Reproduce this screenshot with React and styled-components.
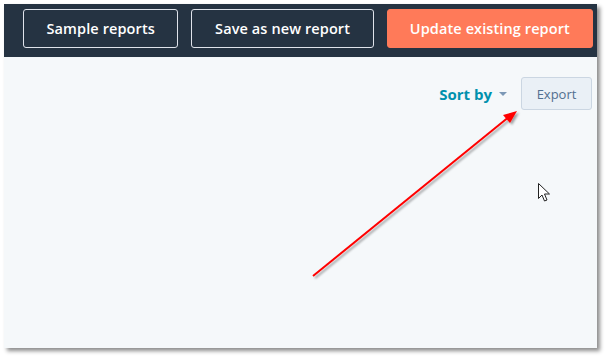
import styled, { createGlobalStyle } from "styled-components";

const GlobalStyle = createGlobalStyle`
  html, body {
    margin: 0;
    padding: 0;
    background: #ffffff;
  }
  body {
    font-family: "Open Sans", "Liberation Sans", sans-serif;
  }
`;

const Page = styled.div`
  width: 608px;
  height: 357px;
  padding: 4px 0 0 4px;
  box-sizing: border-box;
`;

const Frame = styled.div`
  position: relative;
  width: 593px;
  height: 344px;
  background: #f5f8fa;
  box-shadow: 3px 3px 4px rgba(0, 0, 0, 0.45);
  display: flex;
  flex-direction: column;
`;

const Header = styled.div`
  height: 53px;
  background: #253342;
  display: flex;
  align-items: flex-start;
  gap: 13px;
  padding: 5px 4px 0 19px;
  box-sizing: border-box;
`;

const HeaderButton = styled.button`
  height: 39px;
  padding: 0;
  width: ${(p) => p.$w}px;
  border-radius: 3px;
  border: 1px solid ${(p) => (p.$primary ? "#ff7a59" : "#dfe3eb")};
  background: ${(p) => (p.$primary ? "#ff7a59" : "#253342")};
  color: #ffffff;
  font-family: "Open Sans", "Liberation Sans", sans-serif;
  font-weight: 600;
  font-size: 14.5px;
  letter-spacing: 0.1px;
  cursor: pointer;
`;

const Toolbar = styled.div`
  display: flex;
  justify-content: flex-end;
  align-items: center;
  gap: 14px;
  padding: 20px 5px 0 0;
`;

const SortBy = styled.div`
  display: flex;
  align-items: center;
  gap: 7px;
  color: #0091ae;
  font-weight: 700;
  font-size: 15px;
`;

const Caret = styled.span`
  width: 0;
  height: 0;
  border-left: 4px solid transparent;
  border-right: 4px solid transparent;
  border-top: 4px solid #7c98b6;
  margin-top: 1px;
`;

const ExportButton = styled.button`
  width: 71px;
  height: 33px;
  border: 1px solid #cbd6e2;
  border-radius: 3px;
  background: #eaf0f6;
  color: #516f90;
  font-family: "Open Sans", "Liberation Sans", sans-serif;
  font-size: 13px;
  padding: 0;
`;

const Overlay = styled.svg`
  position: absolute;
  left: 0;
  top: 0;
  width: 593px;
  height: 344px;
  pointer-events: none;
  overflow: visible;
`;

export default function App() {
  return (
    <>
      <GlobalStyle />
      <Page>
        <Frame>
          <Header>
            <HeaderButton $w={156}>Sample reports</HeaderButton>
            <HeaderButton $w={183}>Save as new report</HeaderButton>
            <HeaderButton $w={207} $primary>
              Update existing report
            </HeaderButton>
          </Header>
          <Toolbar>
            <SortBy>
              Sort by <Caret />
            </SortBy>
            <ExportButton>Export</ExportButton>
          </Toolbar>
          <Overlay viewBox="0 0 593 344">
            <defs>
              <filter id="sh" x="-20%" y="-20%" width="140%" height="140%">
                <feDropShadow dx="2" dy="2" stdDeviation="1.2" floodColor="#000" floodOpacity="0.35" />
              </filter>
            </defs>
            <g filter="url(#sh)">
              <line x1="309" y1="272" x2="506" y2="112" stroke="#ff0000" strokeWidth="2" />
              <polygon points="513,107 499,111 506,119" fill="#ff0000" />
            </g>
            <path
              d="M534.5 179.5 L534.5 194.5 L538 191 L540.5 197 L543 196 L540.5 190 L545.5 190 Z"
              fill="#ffffff"
              stroke="#222"
              strokeWidth="1"
              strokeLinejoin="round"
            />
          </Overlay>
        </Frame>
      </Page>
    </>
  );
}
